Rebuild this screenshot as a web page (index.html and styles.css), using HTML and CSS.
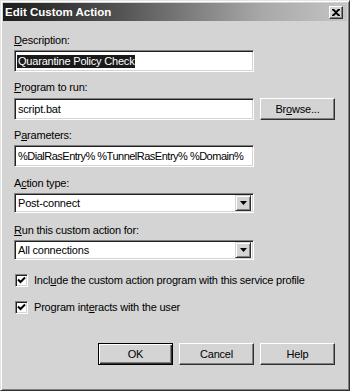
FILE: index.html
```html
<!DOCTYPE html>
<html>
<head>
<meta charset="utf-8">
<link rel="stylesheet" href="styles.css">
</head>
<body>
<div class="window">
  <div class="titlebar">
    <span class="title">Edit Custom Action</span>
    <span class="close"><svg width="8" height="7" viewBox="0 0 8 7"><path d="M0 0h2l2 2 2-2h2v1L5 3.5 8 6v1H6L4 5 2 7H0V6l3-2.5L0 1z" fill="#000"/></svg></span>
  </div>
  <div class="content">
    <div class="label l-desc"><u>D</u>escription:</div>
    <div class="input w-main gap3"><span class="sel">Quarantine Policy Check</span></div>

    <div class="label l-prog"><u>P</u>rogram to run:</div>
    <div class="row gap4">
      <div class="input w-main">script.bat</div>
      <div class="btn browse">Br<u>o</u>wse...</div>
    </div>

    <div class="label l-param">P<u>a</u>rameters:</div>
    <div class="input w-main gap3 tight">%DialRasEntry% %TunnelRasEntry% %Domain%</div>

    <div class="label l-action">A<u>c</u>tion type:</div>
    <div class="select w-main gap3"><span class="val">Post-connect</span><span class="drop"><svg width="7" height="4" viewBox="0 0 7 4"><path d="M0 0h7L3.5 4z" fill="#000"/></svg></span></div>

    <div class="label l-run"><u>R</u>un this custom action for:</div>
    <div class="select w-main gap3"><span class="val">All connections</span><span class="drop"><svg width="7" height="4" viewBox="0 0 7 4"><path d="M0 0h7L3.5 4z" fill="#000"/></svg></span></div>

    <div class="check c1"><span class="box"><svg width="9" height="9" viewBox="0 0 9 9"><path d="M1 3.5l2.5 2.5L8 1.5" stroke="#000" stroke-width="2" fill="none"/></svg></span><span>Incl<u>u</u>de the custom action program with this service profile</span></div>
    <div class="check c2"><span class="box"><svg width="9" height="9" viewBox="0 0 9 9"><path d="M1 3.5l2.5 2.5L8 1.5" stroke="#000" stroke-width="2" fill="none"/></svg></span><span>Program int<u>e</u>racts with the user</span></div>

    <div class="buttons">
      <div class="btn default">OK</div>
      <div class="btn">Cancel</div>
      <div class="btn">Help</div>
    </div>
  </div>
</div>
</body>
</html>
```

FILE: styles.css
```css
html, body {
  margin: 0;
  padding: 0;
  background: #d4d4d4;
}
body {
  font-family: "Liberation Sans", Arial, sans-serif;
  font-size: 11px;
  letter-spacing: -0.2px;
  color: #000;
}
.window {
  width: 350px;
  height: 391px;
  box-sizing: border-box;
  background: #d4d4d4;
  border: 1px solid;
  border-color: #e4e4e4 #303030 #303030 #e4e4e4;
  box-shadow: inset 1px 1px #ffffff, inset -1px -1px #808080;
  padding: 2px;
}
.titlebar {
  height: 18px;
  display: flex;
  align-items: center;
  justify-content: space-between;
  padding: 0 4px 0 2px;
  background: linear-gradient(to right, #1c1c1c 0%, #555 35%, #a8a8a8 75%, #c4c4c4 100%);
}
.title {
  color: #fff;
  font-weight: bold;
  font-size: 11.5px;
  letter-spacing: 0;
}
.close {
  width: 12px;
  height: 11px;
  background: #d4d4d4;
  border: 1px solid;
  border-color: #fff #303030 #303030 #fff;
  box-shadow: inset -1px -1px #808080;
  display: flex;
  align-items: center;
  justify-content: center;
}
.content {
  display: flex;
  flex-direction: column;
  align-items: flex-start;
  padding: 13px 0 0 11px;
}
.label {
  line-height: 13px;
  height: 13px;
}
.l-prog { margin-top: 9px; }
.l-param { margin-top: 9px; }
.l-action { margin-top: 10px; }
.l-run { margin-top: 11px; }
.gap3 { margin-top: 3px; }
.gap4 { margin-top: 4px; }
.w-main { width: 240px; }
.input {
  box-sizing: border-box;
  height: 22px;
  background: #fff;
  border: 1px solid;
  border-color: #808080 #fff #fff #808080;
  box-shadow: inset 1px 1px #202020, inset -1px -1px #d4d4d4;
  padding: 0 3px;
  display: flex;
  align-items: center;
  white-space: nowrap;
  overflow: hidden;
}
.tight { letter-spacing: -0.5px; }
.sel {
  background: #1a1a1a;
  color: #fff;
  line-height: 13px;
  margin-left: -1px;
  padding: 0 1px;
}
.row {
  display: flex;
  gap: 6px;
}
.btn {
  box-sizing: border-box;
  width: 75px;
  height: 22px;
  background: #d4d4d4;
  border: 1px solid;
  border-color: #fff #303030 #303030 #fff;
  box-shadow: inset -1px -1px #808080;
  display: flex;
  align-items: center;
  justify-content: center;
}
.browse { width: 75px; }
.btn.default {
  border: 1px solid #000;
  box-shadow: inset 1px 1px #fff, inset -1px -1px #303030, inset -2px -2px #808080;
}
.select {
  box-sizing: border-box;
  height: 20px;
  background: #fff;
  border: 1px solid;
  border-color: #808080 #fff #fff #808080;
  box-shadow: inset 1px 1px #202020, inset -1px -1px #d4d4d4;
  padding: 2px 2px 2px 3px;
  display: flex;
  align-items: center;
  justify-content: space-between;
}
.drop {
  box-sizing: border-box;
  width: 16px;
  height: 16px;
  background: #d4d4d4;
  border: 1px solid;
  border-color: #d4d4d4 #303030 #303030 #d4d4d4;
  box-shadow: inset 1px 1px #fff, inset -1px -1px #808080;
  display: flex;
  align-items: center;
  justify-content: center;
}
.check {
  display: flex;
  align-items: center;
  gap: 6px;
  height: 14px;
  padding-left: 1px;
}
.c1 { margin-top: 13px; }
.c2 { margin-top: 13px; }
.box {
  box-sizing: border-box;
  width: 13px;
  height: 13px;
  background: #fff;
  border: 1px solid;
  border-color: #808080 #fff #fff #808080;
  box-shadow: inset 1px 1px #202020, inset -1px -1px #d4d4d4;
  display: flex;
  align-items: center;
  justify-content: center;
}
.buttons {
  align-self: stretch;
  display: flex;
  justify-content: flex-end;
  gap: 6px;
  margin-top: 29px;
  padding-right: 12px;
}
```
